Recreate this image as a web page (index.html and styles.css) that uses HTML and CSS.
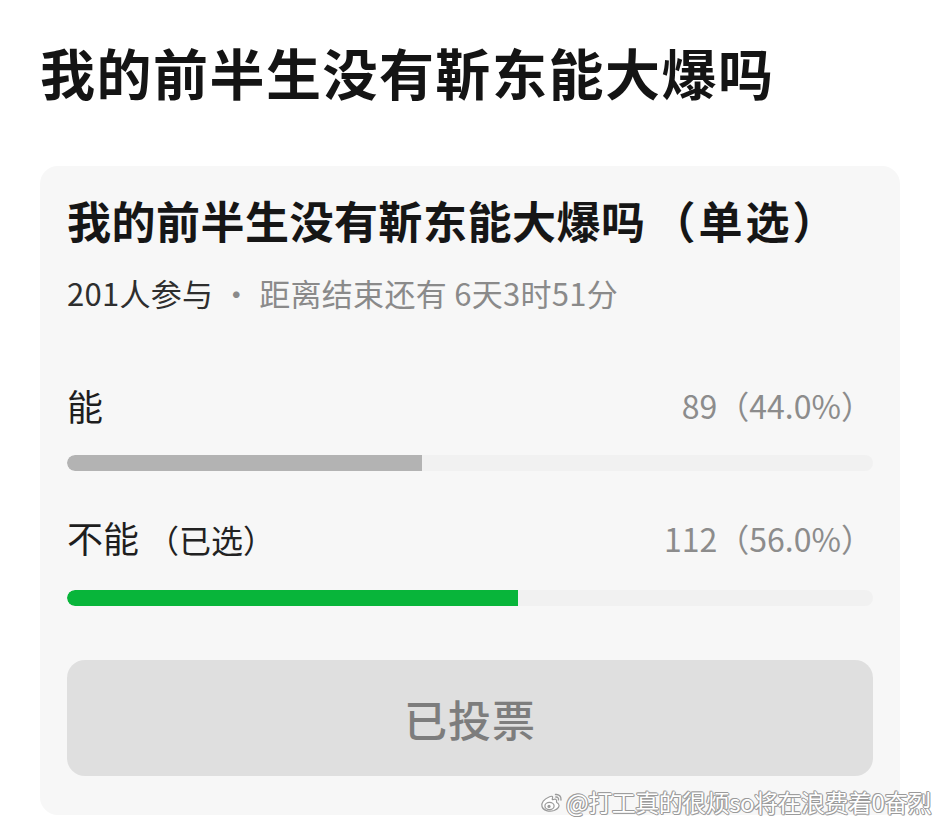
FILE: index.html
```html
<!DOCTYPE html>
<html lang="zh">
<head>
<meta charset="utf-8">
<link rel="stylesheet" href="styles.css">
</head>
<body>
<div class="page">
  <h1 class="page-title">我的前半生没有靳东能大爆吗</h1>
  <div class="card">
    <div class="card-title">我的前半生没有靳东能大爆吗<span class="paren">（单选）</span></div>
    <div class="meta"><span class="meta-count">201人参与</span><span class="meta-rest"> · 距离结束还有 6天3时51分</span></div>
    <div class="option first">
      <div class="opt-row"><span class="opt-label">能</span><span class="opt-value">89（44.0%）</span></div>
      <div class="bar"><div class="fill fill-gray" style="width:44%"></div></div>
    </div>
    <div class="option second">
      <div class="opt-row"><span class="opt-label">不能 <span class="chosen">（已选）</span></span><span class="opt-value">112（56.0%）</span></div>
      <div class="bar"><div class="fill fill-green" style="width:56%"></div></div>
    </div>
    <div class="vote-btn">已投票</div>
  </div>
  <div class="watermark">
    <svg class="wb-logo" width="24" height="22" viewBox="0 0 24 22">
      <path d="M9 6 C4 8 1 12 2 15.5 C3 19.5 9 21 14 19.5 C18.5 18 20 15 18.5 13 C17.8 12 16.5 12 16.5 11 C17 9 16 7.5 13.5 8.5 C12 9 12 8.5 12.5 7 C13 5 11.5 4.8 9 6 Z" fill="#fff" stroke="#9a9a9a" stroke-width="1.2"/>
      <ellipse cx="9.5" cy="15" rx="4.6" ry="3.6" fill="#fff" stroke="#9a9a9a" stroke-width="1.2"/>
      <circle cx="9" cy="15.4" r="1.6" fill="#9a9a9a"/>
      <path d="M15.5 3.5 C19 3 21.5 5.5 21 9" fill="none" stroke="#9a9a9a" stroke-width="1.4" stroke-linecap="round"/>
      <path d="M15.8 6 C17.5 5.8 18.8 7 18.5 8.8" fill="none" stroke="#9a9a9a" stroke-width="1.3" stroke-linecap="round"/>
    </svg>
    <span class="wb-text">@打工真的很烦so将在浪费着0奋烈</span>
  </div>
</div>
</body>
</html>
```

FILE: styles.css
```css
html, body {
  margin: 0;
  padding: 0;
  background: #ffffff;
}
body {
  font-family: "Noto Sans CJK SC", "Noto Sans", sans-serif;
  color: #222;
}
.page {
  position: relative;
  width: 940px;
  height: 829px;
  overflow: hidden;
}
.page-title {
  margin: 37px 0 0 40px;
  font-size: 55px;
  line-height: 68px;
  font-weight: 700;
  color: #141414;
  letter-spacing: 1.5px;
}
.card {
  margin: 61px 0 0 40px;
  width: 860px;
  box-sizing: border-box;
  padding: 26px 27px 39px 27px;
  background: #f7f7f7;
  border-radius: 18px;
}
.card-title {
  font-size: 44px;
  line-height: 56px;
  font-weight: 700;
  color: #161616;
  letter-spacing: 0.5px;
}
.card-title .paren {
  margin-left: 6px;
  letter-spacing: 3px;
}
.meta {
  margin-top: 25px;
  font-size: 31px;
  line-height: 40px;
  letter-spacing: 0.3px;
}
.meta-count {
  color: #2e2e2e;
}
.meta-rest {
  color: #8a8a8a;
}
.option.first {
  margin-top: 68px;
}
.option.second {
  margin-top: 43px;
}
.opt-row {
  display: flex;
  justify-content: space-between;
  align-items: center;
  height: 48px;
}
.opt-label {
  font-size: 36px;
  line-height: 48px;
  color: #1e1e1e;
}
.chosen {
  font-size: 32px;
  color: #222;
}
.opt-value {
  font-size: 32px;
  line-height: 48px;
  color: #8c8c8c;
  padding-right: 0;
}
.bar {
  margin-top: 26px;
  height: 16px;
  background: #f1f1f1;
  border-radius: 8px;
  overflow: hidden;
}
.second .bar {
  margin-top: 28px;
}
.fill {
  height: 100%;
  border-radius: 8px 0 0 8px;
}
.fill-gray {
  background: #b3b3b3;
}
.fill-green {
  background: #08b53a;
}
.vote-btn {
  margin-top: 54px;
  height: 116px;
  background: #dfdfdf;
  border-radius: 18px;
  display: flex;
  align-items: center;
  justify-content: center;
  font-size: 43px;
  font-weight: 500;
  color: #7d7d7d;
  letter-spacing: 1px;
}
.watermark {
  position: absolute;
  left: 540px;
  top: 787px;
  display: flex;
  align-items: center;
  gap: 2px;
}
.wb-text {
  font-size: 24px;
  line-height: 30px;
  color: #ffffff;
  letter-spacing: -0.5px;
  text-shadow: 1px 0 0 #9a9a9a, -1px 0 0 #9a9a9a, 0 1px 0 #9a9a9a, 0 -1px 0 #9a9a9a, 1px 1px 0 #aaa, -1px -1px 0 #aaa;
}
```
